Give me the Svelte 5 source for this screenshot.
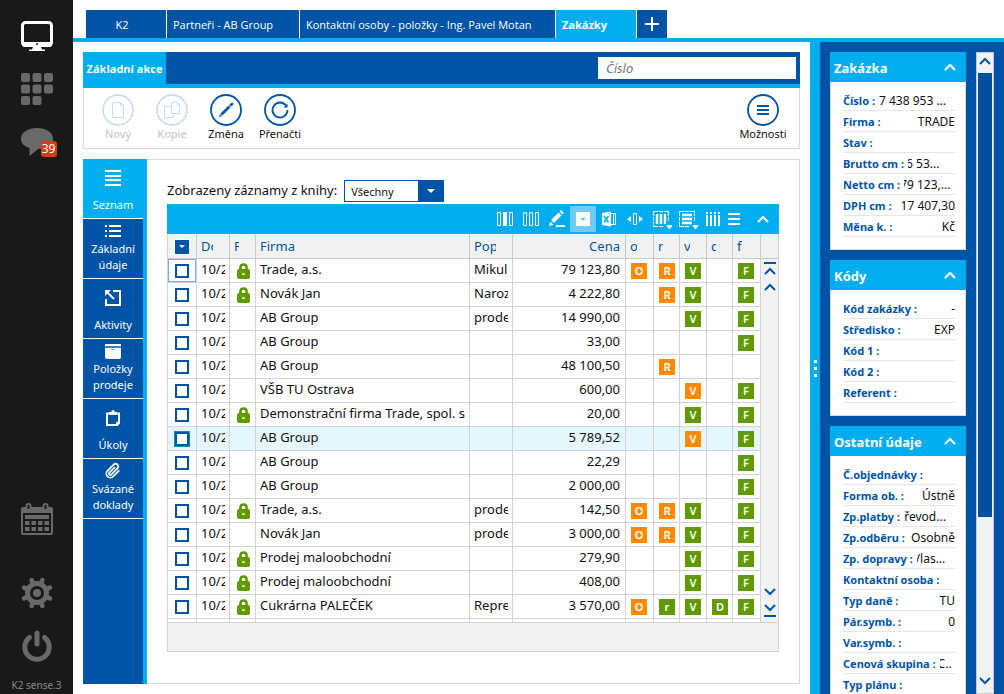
<script>
    const tabs = [
        { name: 'K2', size: 'short' },
        { name: 'Partneři - AB Group', size: 'medium' },
        { name: 'Kontaktní osoby - položky - Ing. Pavel Motan', size: 'long' },
        { name: 'Zakázky', size: 'short', active: true },
    ]

    const actions = [
        { name: 'Nový', icon: 'new', disabled: true },
        { name: 'Kopie', icon: 'copy', disabled: true },
        { name: 'Změna', icon: 'edit' },
        { name: 'Přenačti', icon: 'reload' },
    ]

    const pages = [
        { name: 'Seznam', icon: 'list', active: true },
        { name: 'Základní údaje', icon: 'bullets' },
        { name: 'Aktivity', icon: 'activity' },
        { name: 'Položky prodeje', icon: 'box' },
        { name: 'Úkoly', icon: 'clipboard' },
        { name: 'Svázané doklady', icon: 'clip' },
    ]

    const tools = ['columns-a', 'columns-b', 'pencil', 'filter', 'excel', 'width', 'frame-cols', 'frame-rows', 'stripes', 'menu', 'up']

    const flags = ['o', 'r', 'v', 'd', 'f']

    // flags: letter = badge text, "-" = nothing; colors: o = orange, g = green
    const rows = [
        { lock: true, firm: 'Trade, a.s.', note: 'Mikul', price: '79 123,80', flags: 'ORV-F', colors: 'oog-g' },
        { lock: true, firm: 'Novák Jan', note: 'Naroz', price: '4 222,80', flags: '-RV-F', colors: '-og-g' },
        { firm: 'AB Group', note: 'prode', price: '14 990,00', flags: '--V-F', colors: '--g-g' },
        { firm: 'AB Group', note: '', price: '33,00', flags: '----F', colors: '----g' },
        { firm: 'AB Group', note: '', price: '48 100,50', flags: '-R---', colors: '-o---' },
        { firm: 'VŠB TU Ostrava', note: '', price: '600,00', flags: '--V-F', colors: '--o-g' },
        { lock: true, firm: 'Demonstrační firma Trade, spol. s', note: '', price: '20,00', flags: '--V-F', colors: '--g-g' },
        { firm: 'AB Group', note: '', price: '5 789,52', flags: '--V-F', colors: '--o-g', selected: true },
        { firm: 'AB Group', note: '', price: '22,29', flags: '----F', colors: '----g' },
        { firm: 'AB Group', note: '', price: '2 000,00', flags: '----F', colors: '----g' },
        { lock: true, firm: 'Trade, a.s.', note: 'prode', price: '142,50', flags: 'ORV-F', colors: 'oog-g' },
        { firm: 'Novák Jan', note: 'prode', price: '3 000,00', flags: 'ORV-F', colors: 'oog-g' },
        { lock: true, firm: 'Prodej maloobchodní', note: '', price: '279,90', flags: '--V-F', colors: '--g-g' },
        { lock: true, firm: 'Prodej maloobchodní', note: '', price: '408,00', flags: '--V-F', colors: '--g-g' },
        { lock: true, firm: 'Cukrárna PALEČEK', note: 'Repre', price: '3 570,00', flags: 'OrVDF', colors: 'ogggg' },
        { firm: 'Č', note: '', price: '', flags: '-----', colors: '-----' },
    ]

    // cut = pixels hidden at the start of a value that is too long
    const cards = [
        {
            title: 'Zakázka',
            items: [
                { label: 'Číslo', value: '7 438 953 ...', cut: 0 },
                { label: 'Firma', value: 'TRADE' },
                { label: 'Stav', value: '' },
                { label: 'Brutto cm', value: '6 53...', cut: 2 },
                { label: 'Netto cm', value: '79 123,...', cut: 4 },
                { label: 'DPH cm', value: '17 407,30' },
                { label: 'Měna k.', value: 'Kč' },
            ],
        },
        {
            title: 'Kódy',
            items: [
                { label: 'Kód zakázky', value: '-' },
                { label: 'Středisko', value: 'EXP' },
                { label: 'Kód 1', value: '' },
                { label: 'Kód 2', value: '' },
                { label: 'Referent', value: '' },
            ],
        },
        {
            title: 'Ostatní údaje',
            items: [
                { label: 'Č.objednávky', value: '' },
                { label: 'Forma ob.', value: 'Ústně' },
                { label: 'Zp.platby', value: 'Převod...', cut: 7 },
                { label: 'Zp.odběru', value: 'Osobně' },
                { label: 'Zp. dopravy', value: 'Vlas...', cut: 4 },
                { label: 'Kontaktní osoba', value: '' },
                { label: 'Typ daně', value: 'TU' },
                { label: 'Pár.symb.', value: '0' },
                { label: 'Var.symb.', value: '' },
                { label: 'Cenová skupina', value: 'C..', cut: 2 },
                { label: 'Typ plánu', value: '' },
            ],
        },
    ]

    let search = $state('')
    let book = $state('Všechny')
</script>

{#snippet chevron(dir)}
    <svg width="12" height="8" viewBox="0 0 12 8">
        <path d={dir == 'up' ? 'M1 7 L6 2 L11 7' : 'M1 1 L6 6 L11 1'} fill="none" stroke="currentColor" stroke-width="2" />
    </svg>
{/snippet}

{#snippet actionIcon(name)}
    <svg width="32" height="32" viewBox="0 0 32 32" fill="none" stroke="currentColor">
        <circle cx="16" cy="16" r="15" stroke-width="1.800" />
        {#if name == 'new'}
            <path d="M10.500 8.500H18.500L21.500 11.500V23.500H10.500Z M18.500 8.500V11.500H21.500" />
        {:else if name == 'copy'}
            <path d="M15.500 8.500H21.500L23.500 10.500V19.500H15.500Z M21.500 8.500V10.500H23.500 M15.500 12.500H8.500V23.500H17.500V19.500" />
        {:else if name == 'edit'}
            <path d="M11.500 20.500L19.500 12.500" stroke-width="2.600" />
            <path d="M20.800 11.200L22 10" stroke-width="2.600" stroke-linecap="round" />
            <path d="M9 23L10 20L12 22Z" fill="currentColor" stroke="none" />
        {:else if name == 'reload'}
            <path d="M22 11.500A7.500 7.500 0 1 0 23.500 16" stroke-width="1.800" />
            <path d="M23.500 9.500V13.500H19.500Z" fill="currentColor" stroke="none" />
        {:else}
            <path d="M10 12H22M10 16H22M10 20H22" stroke-width="2" />
        {/if}
    </svg>
{/snippet}

{#snippet pageIcon(name)}
    <svg width="16" height="16" viewBox="0 0 16 16" fill="none" stroke="currentColor">
        {#if name == 'list'}
            <path d="M0 1H16M0 6H16M0 10H16M0 15H16" stroke-width="2" />
        {:else if name == 'bullets'}
            <path d="M0 3H2M4 3H16M0 8H2M4 8H16M0 13H2M4 13H16" stroke-width="2" />
        {:else if name == 'activity'}
            <path d="M8 1H15V15H1V9" stroke-width="2" />
            <path d="M2 2L9 9" stroke-width="2" />
            <path d="M0 0H6L0 6Z" fill="currentColor" stroke="none" />
        {:else if name == 'box'}
            <path d="M0 0H16V2H0Z" fill="currentColor" stroke="none" />
            <path d="M0 4H16V13Q16 15 14 15H2Q0 15 0 13Z" fill="currentColor" stroke="none" />
            <path d="M0 3H16M6 5.500H10" stroke="#7fa9d2" />
        {:else if name == 'clipboard'}
            <path d="M2 3.500H14V13L12 15H2Z" stroke-width="2" />
            <path d="M4 2H6Q8 -2 10 2H12V5H4Z" fill="currentColor" stroke="none" />
            <path d="M11 12H15V13L12 16H11Z" fill="currentColor" stroke="none" />
        {:else}
            <path transform="scale(0.667)" d="M21.440 11.050l-9.190 9.190a6 6 0 0 1-8.490-8.490l9.190-9.190a4 4 0 0 1 5.660 5.660l-9.200 9.190a2 2 0 0 1-2.830-2.830l8.490-8.480" stroke-width="2.600" />
        {/if}
    </svg>
{/snippet}

{#snippet toolIcon(name)}
    <svg width="20" height="20" viewBox="0 0 20 20" fill="none" stroke="currentColor">
        {#if name == 'columns-a'}
            <path d="M2.500 3.500H5.500V16.500H2.500ZM14.500 3.500H17.500V16.500H14.500Z" />
            <path d="M8 3H12V17H8Z" fill="currentColor" stroke="none" />
        {:else if name == 'columns-b'}
            <path d="M2.500 3.500H5.500V16.500H2.500ZM8.500 3.500H11.500V16.500H8.500ZM14.500 3.500H17.500V16.500H14.500Z" />
        {:else if name == 'pencil'}
            <path d="M5.500 12.500L13 5" stroke-width="4" />
            <path d="M14 4L15.500 2.500" stroke-width="4" />
            <path d="M2 17L3.200 12.500L6.500 15.800Z" fill="currentColor" stroke="none" />
            <path d="M9 17H18" stroke-width="2" />
        {:else if name == 'filter'}
            <path d="M3 3H17V17H3Z" fill="currentColor" stroke="none" />
            <path d="M7 9H13L10 12Z" fill="#6fcbf3" stroke="none" />
        {:else if name == 'excel'}
            <path d="M3 4L12 2.500V17.500L3 16Z" fill="currentColor" stroke="none" />
            <path d="M5 7L9.500 13.500M9.500 7L5 13.500" stroke="#00aeef" stroke-width="1.600" />
            <path d="M12 4.500H16.500V15.500H12M14.500 5V15" />
        {:else if name == 'width'}
            <path d="M8.500 4.500H11.500V15.500H8.500Z" />
            <path d="M6 7V13L2 10ZM14 7V13L18 10Z" fill="currentColor" stroke="none" />
        {:else if name == 'frame-cols' || name == 'frame-rows'}
            <path d="M2.500 7V2.500H7M8 2.500H12M13 2.500H17.500V7M17.500 8V12M2.500 8V12M2.500 13V17.500H7M8 17.500H12" />
            {#if name == 'frame-cols'}
                <path d="M6 5V15M10 5V15M14 5V15" stroke-width="2.400" />
            {:else}
                <path d="M5 6H15M5 10H15M5 14H15" stroke-width="2.400" />
            {/if}
            <path d="M16 16.500H21L18.500 20Z" fill="currentColor" />
        {:else if name == 'stripes'}
            <path d="M4 3V5M8 3V5M12 3V5M16 3V5M4 6V17M8 6V17M12 6V17M16 6V17" stroke-width="2" />
        {:else if name == 'menu'}
            <path d="M4 5H16M4 10H16M4 15H16" stroke-width="2" />
        {:else}
            <path d="M5 13L10 8L15 13" stroke-width="2" />
        {/if}
    </svg>
{/snippet}

<div class="app">
    <nav class="rail">
        <button class="rail-item active" aria-label="Desktop">
            <svg width="32" height="32" viewBox="0 0 32 32">
                <rect x="1.500" y="2.500" width="29" height="23" rx="3" fill="none" stroke="currentColor" stroke-width="3" />
                <path d="M1 22H31V24Q31 27 28 27H4Q1 27 1 24Z" fill="currentColor" />
                <path d="M12 27H20L21 29.500H24V31H8V29.500H11Z" fill="currentColor" />
                <circle cx="16" cy="24" r="1" fill="#191919" />
            </svg>
        </button>
        <button class="rail-item" aria-label="Modules">
            <svg width="32" height="32" viewBox="0 0 32 32" fill="currentColor">
                {#each [0, 1, 2, 3, 4, 5, 6, 7] as i}
                    <rect x={(i % 3) * 11.5} y={Math.floor(i / 3) * 11.5} width="9" height="9" rx="2" />
                {/each}
            </svg>
        </button>
        <button class="rail-item" aria-label="Messages">
            <svg width="32" height="32" viewBox="0 0 32 32" fill="currentColor">
                <path d="M16 2C25 2 32 6 32 13C32 20 25 23 17 23L8.500 30V22C3 20.500 0 17 0 13C0 6 7 2 16 2Z" />
            </svg>
            <span class="count">39</span>
        </button>
        <button class="rail-item calendar" aria-label="Calendar">
            <svg width="32" height="32" viewBox="0 0 32 32">
                <path d="M2 4H30Q32 4 32 6V30Q32 32 30 32H2Q0 32 0 30V6Q0 4 2 4ZM2 10V30H30V10Z" fill="currentColor" fill-rule="evenodd" />
                <path d="M7.500 6V3M24.500 6V3" stroke="currentColor" stroke-width="6" stroke-linecap="round" />
                <path d="M7.500 6V2M24.500 6V2" stroke="#191919" stroke-width="2" />
                <path d="M4 12H28V16H4ZM4 18H8.500V22H4ZM10.500 18H15V22H10.500ZM17 18H21.500V22H17ZM23.500 18H28V22H23.500ZM4 24H8.500V28H4ZM10.500 24H15V28H10.500ZM17 24H21.500V28H17ZM23.500 24H28V28H23.500Z" fill="currentColor" />
            </svg>
        </button>
        <button class="rail-item settings" aria-label="Settings">
            <svg width="32" height="32" viewBox="-16 -16 32 32" fill="none" stroke="currentColor">
                <circle r="9.500" stroke-width="5" />
                <circle r="4" fill="currentColor" stroke="none" />
                {#each [0, 1, 2, 3, 4, 5, 6, 7] as i}
                    <path d="M0 -11V-14" stroke-width="4.600" stroke-linecap="round" transform="rotate({i * 45 + 22.5})" />
                {/each}
            </svg>
        </button>
        <button class="rail-item power" aria-label="Power">
            <svg width="32" height="32" viewBox="0 0 32 32" fill="none" stroke="currentColor" stroke-width="5" stroke-linecap="round">
                <path d="M8.500 7.500A12.200 12.200 0 1 0 23.500 7.500" />
                <path d="M16 3V14" />
            </svg>
        </button>
        <span class="version">K2 sense.3</span>
    </nav>

    <div class="work">
        <div class="tabs">
            {#each tabs as tab}
                <button class="tab {tab.size}" class:active={tab.active}>{tab.name}</button>
            {/each}
            <button class="tab add" aria-label="Add tab">
                <svg width="14" height="14" viewBox="0 0 14 14"><path d="M7 0V14M0 7H14" stroke="currentColor" stroke-width="2" /></svg>
            </button>
        </div>

        <div class="columns">
            <main>
                <section class="ribbon">
                    <div class="ribbon-head">
                        <button class="ribbon-tab">Základní akce</button>
                        <input class="search" type="text" placeholder="Číslo" aria-label="Číslo" bind:value={search} />
                    </div>
                    <div class="ribbon-body">
                        {#each actions as a}
                            <button class="action" disabled={a.disabled}>
                                {@render actionIcon(a.icon)}
                                <span>{a.name}</span>
                            </button>
                        {/each}
                        <button class="action options">
                            {@render actionIcon('options')}
                            <span>Možnosti</span>
                        </button>
                    </div>
                </section>

                <div class="content">
                    <nav class="pages">
                        {#each pages as p}
                            <button class="page" class:active={p.active}>
                                {@render pageIcon(p.icon)}
                                <span>{p.name}</span>
                            </button>
                        {/each}
                    </nav>

                    <section class="pane">
                        <div class="book">
                            <label for="book">Zobrazeny záznamy z knihy:</label>
                            <div class="select">
                                <select id="book" bind:value={book}>
                                    <option>Všechny</option>
                                </select>
                                <span class="arrow"></span>
                            </div>
                        </div>

                        <div class="toolbar">
                            {#each tools as t}
                                <button class="tool {t}" aria-label={t}>{@render toolIcon(t)}</button>
                            {/each}
                        </div>

                        <div class="grid">
                            <div class="viewport">
                                <table>
                                    <colgroup>
                                        <col class="w-check" /><col class="w-doc" /><col class="w-lock" /><col /><col class="w-note" /><col class="w-price" />
                                        <col class="w-flag" /><col class="w-narrow" /><col class="w-mid" /><col class="w-narrow" /><col class="w-flag" />
                                    </colgroup>
                                    <thead>
                                        <tr>
                                            <th class="check"><button class="check-menu" aria-label="Výběr"></button></th>
                                            <th><div>Do</div></th>
                                            <th><div>P</div></th>
                                            <th><div>Firma</div></th>
                                            <th><div>Pop</div></th>
                                            <th class="price">Cena</th>
                                            {#each flags as f}
                                                <th><div>{f}</div></th>
                                            {/each}
                                        </tr>
                                    </thead>
                                    <tbody>
                                        {#each rows as row, i}
                                            <tr class:selected={row.selected}>
                                                <td class="check" class:current={i == 0}><input type="checkbox" aria-label={row.firm} /></td>
                                                <td><div>10/2</div></td>
                                                <td class="lock">
                                                    {#if row.lock}
                                                        <svg width="13" height="16" viewBox="0 0 13 16">
                                                            <path d="M3.500 8V4.500Q3.500 1.500 6.500 1.500Q9.500 1.500 9.500 4.500V8" fill="none" stroke="#609a00" stroke-width="2.600" />
                                                            <rect y="6" width="13" height="10" rx="2" fill="#609a00" />
                                                            <rect x="5" y="10" width="3" height="2" fill="#d5e6b5" />
                                                        </svg>
                                                    {/if}
                                                </td>
                                                <td><div>{row.firm}</div></td>
                                                <td><div>{row.note}</div></td>
                                                <td class="price">{row.price}</td>
                                                {#each row.flags.split('') as f, n}
                                                    <td class="flag">
                                                        {#if f != '-'}
                                                            <span class="badge" class:orange={row.colors[n] == 'o'}>{f}</span>
                                                        {/if}
                                                    </td>
                                                {/each}
                                            </tr>
                                        {/each}
                                    </tbody>
                                </table>
                            </div>
                            <div class="stepper">
                                <div class="stepper-head"></div>
                                <button class="first" aria-label="First">{@render chevron('up')}</button>
                                <button aria-label="Previous">{@render chevron('up')}</button>
                                <button class="next" aria-label="Next">{@render chevron('down')}</button>
                                <button class="last" aria-label="Last">{@render chevron('down')}</button>
                            </div>
                        </div>
                        <div class="grid-foot"></div>
                    </section>
                </div>
            </main>

            <div class="splitter"><i></i><i></i><i></i></div>

            <aside>
                <div class="cards">
                    {#each cards as card}
                        <section class="card">
                            <button class="card-head">
                                <span>{card.title}</span>
                                {@render chevron('up')}
                            </button>
                            <dl>
                                {#each card.items as item}
                                    <div class="item">
                                        <dt>{item.label} :</dt>
                                        {#if item.cut === undefined}
                                            <dd>{item.value}</dd>
                                        {:else}
                                            <dd class="cut" style="text-indent: {-item.cut}px">{item.value}</dd>
                                        {/if}
                                    </div>
                                {/each}
                            </dl>
                        </section>
                    {/each}
                </div>
                <div class="scrollbar">
                    <button aria-label="Scroll up">{@render chevron('up')}</button>
                    <div class="track"><div class="thumb"></div></div>
                    <button aria-label="Scroll down">{@render chevron('down')}</button>
                </div>
            </aside>
        </div>
    </div>
</div>

<style>
    :global(body) {
        margin: 0;
        background: #fff;
    }

    .app {
        --blue: #0054a6;
        --cyan: #00aeef;
        --line: #d9d9d9;
        display: flex;
        height: 100vh;
        overflow: hidden;
        font-family: "Noto Sans", "Open Sans", sans-serif;
        font-size: 13px;
        color: #111;
    }

    .app * {
        box-sizing: border-box;
    }

    button {
        margin: 0;
        padding: 0;
        border: 0;
        background: none;
        font: inherit;
        color: inherit;
    }

    svg {
        display: block;
        flex: none;
        overflow: visible;
    }

    /* left rail */
    .rail {
        flex: none;
        display: flex;
        flex-direction: column;
        align-items: center;
        width: 73px;
        padding-top: 20px;
        background: #191919;
        color: #696969;
    }

    .rail-item {
        position: relative;
        height: 32px;
        margin-bottom: 21px;
    }

    .rail-item.active {
        color: #fff;
    }

    .count {
        position: absolute;
        right: -4px;
        bottom: 1px;
        width: 16px;
        border-radius: 3px;
        background: #dc3912;
        color: #fff;
        font-size: 12px;
        line-height: 16px;
        text-align: center;
    }

    .calendar {
        margin-top: auto;
        margin-bottom: 42px;
    }

    .power {
        margin-bottom: 14px;
    }

    .version {
        height: 18px;
        color: #8a8a8a;
        font-size: 10px;
        line-height: 18px;
    }

    /* tabs */
    .work {
        flex: 1;
        min-width: 0;
        display: flex;
        flex-direction: column;
    }

    .tabs {
        display: flex;
        gap: 1px;
        padding: 10px 13px 0;
        border-bottom: 4px solid var(--cyan);
    }

    .tab {
        height: 28px;
        padding: 0 6px;
        background: var(--blue);
        color: #fff;
        font-family: "Open Sans", "Noto Sans", sans-serif;
        font-size: 11px;
        text-align: left;
        white-space: nowrap;
    }

    .tab:first-child {
        padding-right: 14px;
        text-align: center;
    }

    .tab.active {
        background: var(--cyan);
        font-weight: 700;
    }

    .short {
        width: 80px;
    }

    .medium {
        width: 132px;
    }

    .long {
        width: 255px;
    }

    .add {
        width: 30px;
        padding: 0 8px;
    }

    .columns {
        flex: 1;
        min-height: 0;
        display: flex;
    }

    main {
        flex: 1;
        min-width: 0;
        display: flex;
        flex-direction: column;
        gap: 10px;
        padding: 10px;
    }

    /* ribbon */
    .ribbon-head {
        display: flex;
        justify-content: space-between;
        height: 36px;
        background: var(--blue);
        border-bottom: 4px solid var(--cyan);
    }

    .ribbon-tab {
        width: 83px;
        background: var(--cyan);
        color: #fff;
        font-family: "Open Sans", "Noto Sans", sans-serif;
        font-size: 11px;
        font-weight: 700;
        white-space: nowrap;
    }

    .search {
        width: 198px;
        height: 22px;
        margin: 5px 4px;
        padding: 0 8px;
        border: 0;
        background: #fff;
        font: inherit;
    }

    .search::placeholder {
        color: #777;
        font-style: italic;
    }

    .ribbon-body {
        display: flex;
        padding: 6px 9px 6px 7px;
        border: 1px solid var(--line);
        border-top: 0;
    }

    .action {
        display: flex;
        flex-direction: column;
        align-items: center;
        width: 54px;
        color: var(--blue);
        font-size: 11px;
        line-height: 16px;
    }

    .action span {
        color: #111;
    }

    .action:disabled {
        color: #ccddee;
    }

    .action:disabled span {
        color: #c4c4c4;
    }

    .options {
        margin-left: auto;
    }

    /* page list */
    .content {
        flex: 1;
        min-height: 0;
        display: flex;
    }

    .pages {
        flex: none;
        width: 64px;
        background: linear-gradient(to right, var(--blue) 60px, var(--cyan) 60px);
    }

    .page {
        display: flex;
        flex-direction: column;
        align-items: center;
        justify-content: space-between;
        width: 60px;
        height: 60px;
        padding: 4px 0 5px;
        border-bottom: 1px solid #fff;
        color: #fff;
        font-size: 11px;
        line-height: 16px;
    }

    .page.active {
        background: var(--cyan);
    }

    .page:nth-child(odd) {
        padding-top: 11px;
    }

    .page:nth-child(4) {
        padding-top: 5px;
    }

    .pane {
        flex: 1;
        min-width: 0;
        display: flex;
        flex-direction: column;
        padding: 20px 20px 31px;
        border: 1px solid var(--line);
        border-left: 0;
    }

    .book {
        display: flex;
        align-items: center;
        gap: 7px;
        margin-bottom: 2px;
    }

    .book label {
        line-height: 18px;
        padding-bottom: 2px;
    }

    .select {
        position: relative;
    }

    select {
        display: block;
        width: 100px;
        height: 22px;
        padding: 0 6px;
        border: 1px solid var(--blue);
        border-radius: 0;
        appearance: none;
        background: #fff;
        font: inherit;
        font-size: 11px;
        color: #111;
    }

    .arrow {
        position: absolute;
        top: 0;
        right: 0;
        width: 26px;
        height: 22px;
        background: var(--blue);
        pointer-events: none;
    }

    .arrow::after,
    .check-menu::after {
        content: "";
        display: block;
        width: 0;
        margin: 9px auto 0;
        border: 4px solid transparent;
        border-top-color: #fff;
        border-bottom: 0;
    }

    /* grid */
    .toolbar {
        display: flex;
        justify-content: flex-end;
        align-items: center;
        height: 30px;
        padding-right: 3px;
        background: var(--cyan);
        color: #fff;
    }

    .tool {
        display: flex;
        align-items: center;
        justify-content: center;
        width: 26px;
        height: 26px;
    }

    .tool.filter {
        background: #6fcbf3;
    }

    .tool.menu {
        width: 16px;
    }

    .tool.up {
        margin-left: 8px;
    }

    .grid {
        flex: 1;
        min-height: 0;
        display: flex;
        border-left: 1px solid #d1d3d8;
    }

    .viewport {
        flex: 1;
        min-width: 0;
        overflow: hidden;
    }

    table {
        width: 100%;
        table-layout: fixed;
        border-collapse: separate;
        border-spacing: 0;
    }

    .w-check {
        width: 29px;
    }

    .w-doc {
        width: 33px;
    }

    .w-lock {
        width: 26px;
    }

    .w-note {
        width: 43px;
    }

    .w-price {
        width: 113px;
    }

    .w-flag {
        width: 28px;
    }

    .w-narrow {
        width: 26px;
    }

    .w-mid {
        width: 27px;
    }

    th,
    td {
        height: 24px;
        padding: 0 4px;
        border-right: 1px solid #d1d3d8;
        border-bottom: 1px solid #d1d3d8;
        line-height: 20px;
        font-weight: 400;
        text-align: left;
        vertical-align: middle;
        white-space: nowrap;
    }

    td {
        padding-bottom: 3px;
    }

    th {
        height: 25px;
        padding-right: 16px;
        background: #f2f2f2;
        border-color: #c8c8c8;
        color: var(--blue);
    }

    th div,
    td div {
        overflow: hidden;
    }

    th.price,
    td.price {
        padding-right: 5px;
        text-align: right;
    }

    tr.selected td {
        background: #e5f6fd;
    }

    th.check,
    td.check {
        padding: 1px 0 0 7px;
        line-height: 0;
    }

    td.current {
        box-shadow: inset 0 0 0 1px #6fb9cb;
    }

    .check input {
        display: block;
        width: 14px;
        height: 14px;
        margin: 0;
        border: 2px solid var(--blue);
        appearance: none;
        background: #fff;
    }

    .selected .check input {
        outline: 1px solid #0095b3;
    }

    .check-menu {
        display: block;
        width: 14px;
        height: 14px;
        background: var(--blue);
        outline: 1px solid #fff;
    }

    .check-menu::after {
        margin-top: 0;
        border-width: 3px;
        border-bottom: 0;
    }

    td.lock {
        padding: 1px 0 0 7px;
    }

    td.flag {
        padding: 1px 0 0 5px;
    }

    .badge {
        display: block;
        width: 16px;
        height: 16px;
        background: #609a00;
        color: #fff;
        font-size: 11px;
        font-weight: 600;
        line-height: 16px;
        text-align: center;
    }

    .badge.orange {
        background: #ff8a00;
    }

    .stepper {
        flex: none;
        display: flex;
        flex-direction: column;
        align-items: center;
        width: 18px;
        padding-bottom: 5px;
        background: #f2f2f2;
        border-right: 1px solid #d1d3d8;
        color: var(--blue);
    }

    .stepper-head {
        align-self: stretch;
        height: 25px;
        margin-bottom: 3px;
        border-bottom: 1px solid #c8c8c8;
    }

    .stepper button {
        margin-bottom: 8px;
    }

    .stepper .first {
        padding-top: 3px;
        border-top: 2px solid;
    }

    .stepper .next {
        margin-top: auto;
    }

    .stepper .last {
        margin-bottom: 0;
        padding-bottom: 3px;
        border-bottom: 2px solid;
    }

    .grid-foot {
        height: 30px;
        background: #f2f2f2;
        border: 1px solid #d1d3d8;
    }

    /* right panel */
    .splitter {
        flex: none;
        display: flex;
        flex-direction: column;
        align-items: center;
        justify-content: center;
        gap: 4px;
        width: 10px;
        background: var(--cyan);
    }

    .splitter i {
        width: 3px;
        height: 3px;
        background: #fff;
    }

    aside {
        flex: none;
        display: flex;
        gap: 10px;
        width: 184px;
        padding: 10px 10px 0;
        background: var(--blue);
    }

    .cards {
        flex: 1;
        min-width: 0;
        overflow: hidden;
    }

    .card {
        margin-bottom: 10px;
        background: #fff;
    }

    .card-head {
        display: flex;
        align-items: center;
        justify-content: space-between;
        width: 100%;
        height: 30px;
        padding: 2px 10px 0 4px;
        background: var(--cyan);
        color: #fff;
        font-weight: 700;
    }

    .card-head svg {
        margin-bottom: 3px;
    }

    dl {
        margin: 0;
        padding: 8px 10px 12px 12px;
        border: 1px solid var(--line);
        border-top: 0;
        font-size: 12px;
        line-height: 22px;
    }

    .item {
        display: flex;
        height: 21px;
        border-bottom: 1px solid #e6e6e6;
        white-space: nowrap;
    }

    dt {
        color: var(--blue);
        font-size: 11px;
        font-weight: 700;
    }

    dd {
        flex: 1;
        min-width: 0;
        margin: 0 0 0 4px;
        text-align: right;
    }

    dd.cut {
        overflow: hidden;
        text-align: left;
    }

    .scrollbar {
        flex: none;
        display: flex;
        flex-direction: column;
        width: 18px;
        border: 1px solid #c8c8c8;
        background: #f2f2f2;
        color: var(--blue);
    }

    .scrollbar button {
        display: flex;
        align-items: center;
        justify-content: center;
        height: 20px;
        padding-bottom: 4px;
    }

    .track {
        flex: 1;
        padding: 0 1px;
    }

    .thumb {
        height: 74%;
        background: #00509b;
    }
</style>
